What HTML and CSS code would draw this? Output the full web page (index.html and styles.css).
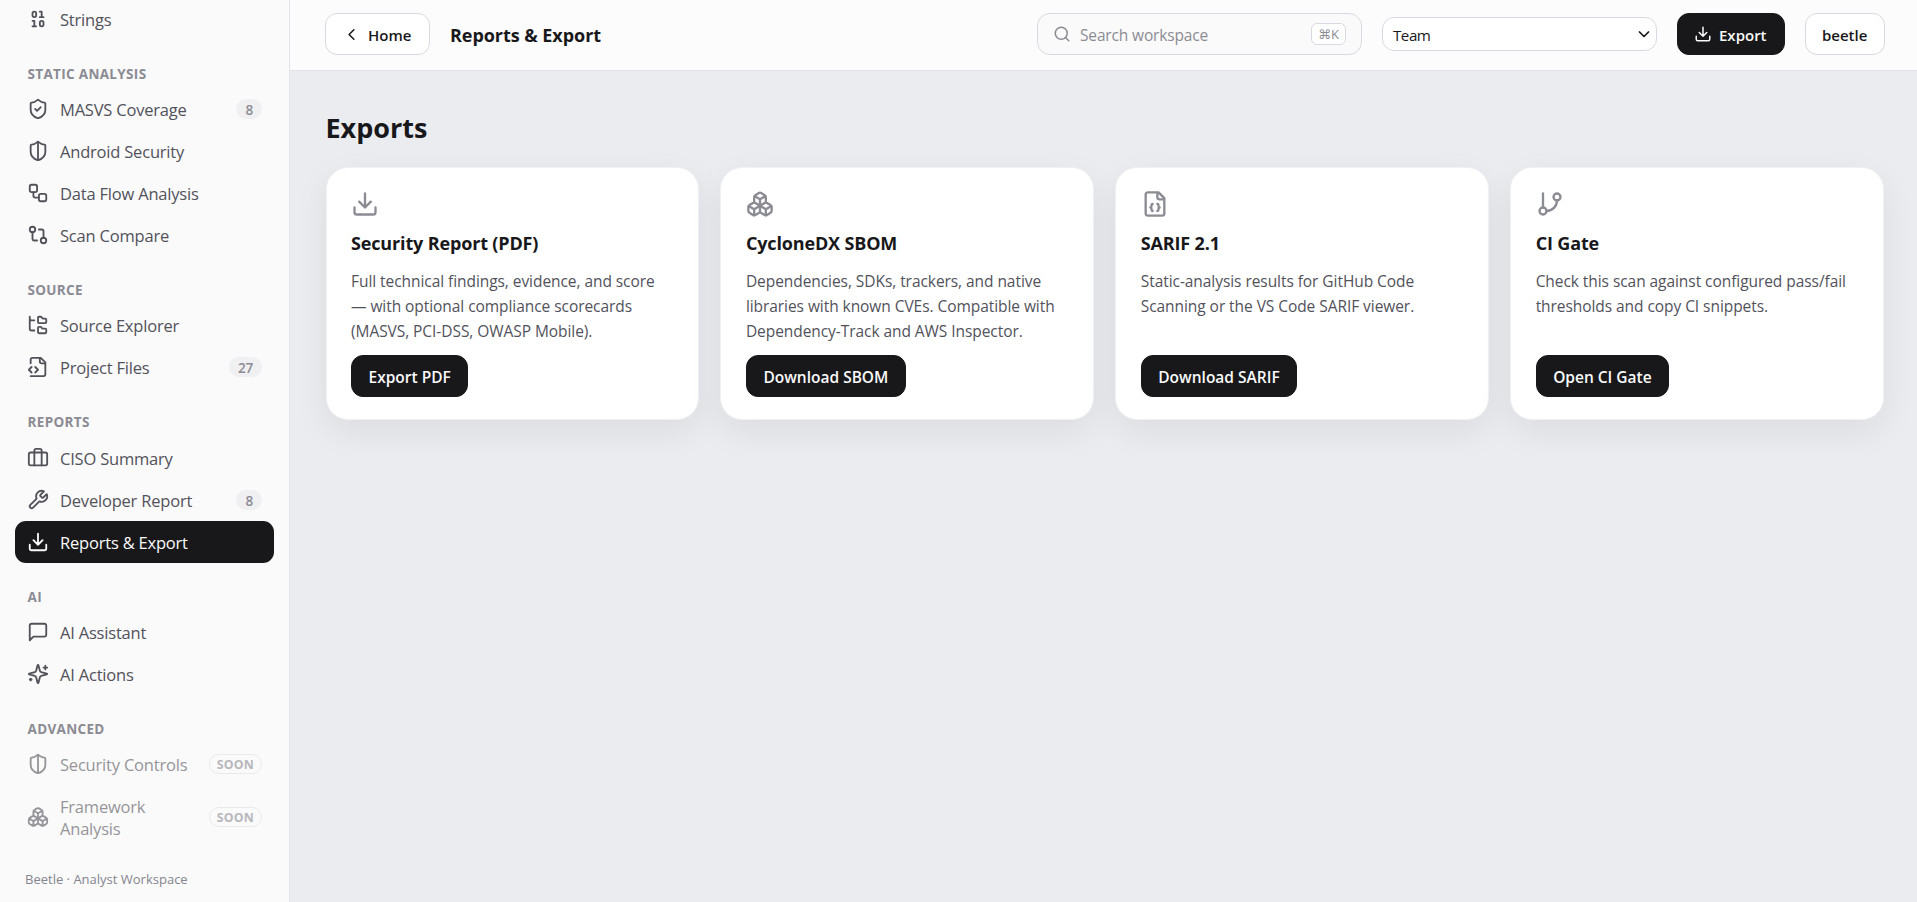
FILE: index.html
```html
<!DOCTYPE html>
<html lang="en">
  <head>
    <meta charset="UTF-8" />
    <title>Reports &amp; Export</title>
    <link rel="stylesheet" href="styles.css">
  </head>

  <body>
    <!-- icon set -->
    <svg class="icon-defs" width="0" height="0">
      <symbol id="i-binary" viewBox="0 0 24 24"><rect x="14" y="14" width="4" height="6" rx="2"/><rect x="6" y="4" width="4" height="6" rx="2"/><path d="M6 20h4M14 10h4M6 14h2v6M14 4h2v6"/></symbol>
      <symbol id="i-shield-check" viewBox="0 0 24 24"><path d="M20 13c0 5-3.5 7.5-7.66 8.95a1 1 0 0 1-.67-.01C7.5 20.5 4 18 4 13V6a1 1 0 0 1 1-1c2 0 4.5-1.2 6.24-2.72a1.17 1.17 0 0 1 1.52 0C14.51 3.81 17 5 19 5a1 1 0 0 1 1 1z"/><path d="m9 12 2 2 4-4"/></symbol>
      <symbol id="i-shield" viewBox="0 0 24 24"><path d="M20 13c0 5-3.5 7.5-7.66 8.95a1 1 0 0 1-.67-.01C7.5 20.5 4 18 4 13V6a1 1 0 0 1 1-1c2 0 4.5-1.2 6.24-2.72a1.17 1.17 0 0 1 1.52 0C14.51 3.81 17 5 19 5a1 1 0 0 1 1 1z"/><path d="M12 22V2"/></symbol>
      <symbol id="i-workflow" viewBox="0 0 24 24"><rect width="8" height="8" x="3" y="3" rx="2"/><path d="M7 11v4a2 2 0 0 0 2 2h4"/><rect width="8" height="8" x="13" y="13" rx="2"/></symbol>
      <symbol id="i-compare" viewBox="0 0 24 24"><circle cx="18" cy="18" r="3"/><circle cx="6" cy="6" r="3"/><path d="M13 6h3a2 2 0 0 1 2 2v7M11 18H8a2 2 0 0 1-2-2V9"/></symbol>
      <symbol id="i-tree" viewBox="0 0 24 24"><path d="M20 10a1 1 0 0 0 1-1V6a1 1 0 0 0-1-1h-2.500a1 1 0 0 1-.8-.4l-.9-1.200A1 1 0 0 0 15 3h-2a1 1 0 0 0-1 1v5a1 1 0 0 0 1 1ZM20 21a1 1 0 0 0 1-1v-3a1 1 0 0 0-1-1h-2.900a1 1 0 0 1-.88-.55l-.42-.85a1 1 0 0 0-.92-.6H13a1 1 0 0 0-1 1v5a1 1 0 0 0 1 1ZM3 5a2 2 0 0 0 2 2h3M3 3v13a2 2 0 0 0 2 2h3"/></symbol>
      <symbol id="i-file-code" viewBox="0 0 24 24"><path d="M4 22h14a2 2 0 0 0 2-2V7l-5-5H6a2 2 0 0 0-2 2v4"/><path d="M14 2v4a2 2 0 0 0 2 2h4M5 12l-3 3 3 3M9 18l3-3-3-3"/></symbol>
      <symbol id="i-case" viewBox="0 0 24 24"><path d="M16 20V4a2 2 0 0 0-2-2h-4a2 2 0 0 0-2 2v16"/><rect width="20" height="14" x="2" y="6" rx="2"/></symbol>
      <symbol id="i-wrench" viewBox="0 0 24 24"><path d="M14.7 6.300a1 1 0 0 0 0 1.400l1.600 1.600a1 1 0 0 0 1.400 0l3.770-3.770a6 6 0 0 1-7.940 7.940l-6.910 6.910a2.120 2.120 0 0 1-3-3l6.910-6.910a6 6 0 0 1 7.940-7.940l-3.760 3.760z"/></symbol>
      <symbol id="i-download" viewBox="0 0 24 24"><path d="M21 15v4a2 2 0 0 1-2 2H5a2 2 0 0 1-2-2v-4M7 10l5 5 5-5M12 15V3"/></symbol>
      <symbol id="i-message" viewBox="0 0 24 24"><path d="M21 15a2 2 0 0 1-2 2H7l-4 4V5a2 2 0 0 1 2-2h14a2 2 0 0 1 2 2z"/></symbol>
      <symbol id="i-sparkles" viewBox="0 0 24 24"><path d="M9.937 15.500A2 2 0 0 0 8.500 14.063l-6.135-1.582a.5.5 0 0 1 0-.962L8.500 9.936A2 2 0 0 0 9.937 8.500l1.582-6.135a.5.5 0 0 1 .963 0L14.063 8.500A2 2 0 0 0 15.500 9.937l6.135 1.581a.5.5 0 0 1 0 .964L15.500 14.063a2 2 0 0 0-1.437 1.437l-1.582 6.135a.5.5 0 0 1-.963 0zM20 3v4M22 5h-4M4 17v2M5 18H3"/></symbol>
      <symbol id="i-boxes" viewBox="0 0 24 24"><path d="M2.970 12.920A2 2 0 0 0 2 14.630v3.240a2 2 0 0 0 .97 1.710l3 1.800a2 2 0 0 0 2.060 0L12 19v-5.500l-5-3-4.030 2.420ZM7 16.500l-4.740-2.850M7 16.500l5-3M7 16.500v5.170M12 13.500V19l3.970 2.380a2 2 0 0 0 2.060 0l3-1.800a2 2 0 0 0 .97-1.710v-3.240a2 2 0 0 0-.97-1.710L17 10.500l-5 3ZM17 16.500l-5-3M17 16.500l4.740-2.850M17 16.500v5.170M7.970 4.420A2 2 0 0 0 7 6.130v4.370l5 3 5-3V6.130a2 2 0 0 0-.97-1.710l-3-1.800a2 2 0 0 0-2.060 0l-3 1.800ZM12 8 7.260 5.150M12 8l4.740-2.850M12 13.500V8"/></symbol>
      <symbol id="i-file-json" viewBox="0 0 24 24"><path d="M15 2H6a2 2 0 0 0-2 2v16a2 2 0 0 0 2 2h12a2 2 0 0 0 2-2V7ZM14 2v4a2 2 0 0 0 2 2h4M10 12a1 1 0 0 0-1 1v1a1 1 0 0 1-1 1 1 1 0 0 1 1 1v1a1 1 0 0 0 1 1M14 18a1 1 0 0 0 1-1v-1a1 1 0 0 1 1-1 1 1 0 0 1-1-1v-1a1 1 0 0 0-1-1"/></symbol>
      <symbol id="i-branch" viewBox="0 0 24 24"><path d="M6 3v12"/><circle cx="18" cy="6" r="3"/><circle cx="6" cy="18" r="3"/><path d="M18 9a9 9 0 0 1-9 9"/></symbol>
      <symbol id="i-search" viewBox="0 0 24 24"><circle cx="11" cy="11" r="8"/><path d="m21 21-4.300-4.300"/></symbol>
      <symbol id="i-left" viewBox="0 0 24 24"><path d="m15 18-6-6 6-6"/></symbol>
      <symbol id="i-down" viewBox="0 0 24 24"><path d="m3 8 9 9 9-9"/></symbol>
    </svg>

    <div class="app">
      <aside class="sidebar">
        <nav class="nav">
          <a class="nav-item"><svg class="icon"><use href="#i-binary"/></svg><span class="nav-text">Strings</span></a>

          <div class="nav-label">STATIC ANALYSIS</div>
          <a class="nav-item"><svg class="icon"><use href="#i-shield-check"/></svg><span class="nav-text">MASVS Coverage</span><span class="count">8</span></a>
          <a class="nav-item"><svg class="icon"><use href="#i-shield"/></svg><span class="nav-text">Android Security</span></a>
          <a class="nav-item"><svg class="icon"><use href="#i-workflow"/></svg><span class="nav-text">Data Flow Analysis</span></a>
          <a class="nav-item"><svg class="icon"><use href="#i-compare"/></svg><span class="nav-text">Scan Compare</span></a>

          <div class="nav-label">SOURCE</div>
          <a class="nav-item"><svg class="icon"><use href="#i-tree"/></svg><span class="nav-text">Source Explorer</span></a>
          <a class="nav-item"><svg class="icon"><use href="#i-file-code"/></svg><span class="nav-text">Project Files</span><span class="count">27</span></a>

          <div class="nav-label">REPORTS</div>
          <a class="nav-item"><svg class="icon"><use href="#i-case"/></svg><span class="nav-text">CISO Summary</span></a>
          <a class="nav-item"><svg class="icon"><use href="#i-wrench"/></svg><span class="nav-text">Developer Report</span><span class="count">8</span></a>
          <a class="nav-item active"><svg class="icon"><use href="#i-download"/></svg><span class="nav-text">Reports &amp; Export</span></a>

          <div class="nav-label">AI</div>
          <a class="nav-item"><svg class="icon"><use href="#i-message"/></svg><span class="nav-text">AI Assistant</span></a>
          <a class="nav-item"><svg class="icon"><use href="#i-sparkles"/></svg><span class="nav-text">AI Actions</span></a>

          <div class="nav-label">ADVANCED</div>
          <a class="nav-item disabled"><svg class="icon"><use href="#i-shield"/></svg><span class="nav-text">Security Controls</span><span class="soon">SOON</span></a>
          <a class="nav-item disabled"><svg class="icon"><use href="#i-boxes"/></svg><span class="nav-text">Framework Analysis</span><span class="soon">SOON</span></a>
        </nav>
        <div class="sidebar-footer">Beetle · Analyst Workspace</div>
      </aside>

      <div class="main">
        <header class="topbar">
          <button class="btn btn-home"><svg class="icon"><use href="#i-left"/></svg><span>Home</span></button>
          <div class="page-title">Reports &amp; Export</div>
          <div class="search">
            <svg class="icon"><use href="#i-search"/></svg>
            <span class="search-text">Search workspace</span>
            <kbd>⌘K</kbd>
          </div>
          <div class="select"><span>Team</span><svg class="icon"><use href="#i-down"/></svg></div>
          <button class="btn btn-dark btn-export"><svg class="icon"><use href="#i-download"/></svg><span>Export</span></button>
          <button class="btn btn-user"><span>beetle</span></button>
        </header>

        <main class="content">
          <h1>Exports</h1>
          <div class="cards">
            <section class="card">
              <svg class="icon"><use href="#i-download"/></svg>
              <h2>Security Report (PDF)</h2>
              <p>Full technical findings, evidence, and score — with optional compliance scorecards (MASVS, PCI-DSS, OWASP Mobile).</p>
              <button class="btn btn-dark">Export PDF</button>
            </section>
            <section class="card">
              <svg class="icon"><use href="#i-boxes"/></svg>
              <h2>CycloneDX SBOM</h2>
              <p>Dependencies, SDKs, trackers, and native libraries with known CVEs. Compatible with Dependency-Track and AWS Inspector.</p>
              <button class="btn btn-dark">Download SBOM</button>
            </section>
            <section class="card">
              <svg class="icon"><use href="#i-file-json"/></svg>
              <h2>SARIF 2.1</h2>
              <p>Static-analysis results for GitHub Code Scanning or the VS Code SARIF viewer.</p>
              <button class="btn btn-dark">Download SARIF</button>
            </section>
            <section class="card">
              <svg class="icon"><use href="#i-branch"/></svg>
              <h2>CI Gate</h2>
              <p>Check this scan against configured pass/fail thresholds and copy CI snippets.</p>
              <button class="btn btn-dark">Open CI Gate</button>
            </section>
          </div>
        </main>
      </div>
    </div>
  </body>
</html>
```
FILE: styles.css
```css
* {
  box-sizing: border-box;
}
body {
  margin: 0;
  background: #ebecf0;
  color: #18181b;
  font-family: "Segoe UI", "Open Sans", sans-serif;
  font-size: 16px;
}
.icon-defs {
  display: none;
}
.icon {
  fill: none;
  stroke: currentColor;
  stroke-width: 2;
  stroke-linecap: round;
  stroke-linejoin: round;
  flex-shrink: 0;
}
.app {
  display: flex;
  height: 902px;
  overflow: hidden;
}

/* sidebar, scrolled to the end of the list */
.sidebar {
  width: 290px;
  flex-shrink: 0;
  display: flex;
  flex-direction: column;
  justify-content: flex-end;
  background: #fafafa;
  border-right: 1px solid #e2e3e8;
}
.nav {
  flex-shrink: 0;
  padding: 0 15px;
}
.nav-item {
  display: flex;
  align-items: center;
  gap: 11px;
  min-height: 42px;
  padding: 9px 12px;
  border-radius: 11px;
  color: #52525b;
  font-size: 16.5px;
  line-height: 22px;
  letter-spacing: -0.2px;
}
.nav-item .icon {
  width: 22px;
  height: 22px;
}
.nav-text {
  flex: 1;
  padding-top: 2px;
}
.nav-item.active {
  background: #18181b;
  color: #fafafa;
}
.nav-item.disabled {
  opacity: 0.6;
}
.nav-label {
  height: 48.3px;
  padding: 24px 12.5px 0;
  color: #8b8b94;
  font-size: 13.5px;
  font-weight: 700;
  line-height: 20px;
  letter-spacing: 0.33px;
}
.count {
  height: 20px;
  padding: 0 9px;
  border-radius: 10px;
  background: #f0f0f2;
  color: #8b8b94;
  font-size: 13.5px;
  font-weight: 600;
  line-height: 22px;
}
.soon {
  height: 20px;
  padding: 0 7px;
  border: 1px solid #e0e0e6;
  border-radius: 10px;
  color: #8b8b94;
  font-size: 12.3px;
  font-weight: 700;
  line-height: 19px;
  letter-spacing: 0.25px;
}
.sidebar-footer {
  flex-shrink: 0;
  height: 52.8px;
  padding: 20px 25px 0;
  color: #85858f;
  font-size: 13px;
  line-height: 20px;
}

/* top bar */
.main {
  flex: 1;
  min-width: 0;
}
.topbar {
  height: 71px;
  display: flex;
  align-items: center;
  gap: 20px;
  padding: 0 32px 2px 35px;
  background: #fcfcfc;
  border-bottom: 1px solid #e2e3e8;
}
.topbar span {
  padding-top: 2px;
}
.btn {
  display: inline-flex;
  align-items: center;
  height: 42px;
  padding: 0 16px;
  border: 1px solid #d9d9e3;
  border-radius: 12px;
  background: #fff;
  color: #18181b;
  font-family: inherit;
  font-size: 15px;
  font-weight: 600;
}
.btn-dark {
  border-color: #18181b;
  background: #18181b;
  color: #fafafa;
}
.btn-home {
  width: 105px;
}
.btn-home .icon {
  width: 19px;
  height: 19px;
  margin-right: 7px;
}
.page-title {
  margin-right: auto;
  padding-top: 2px;
  font-size: 18px;
  font-weight: 700;
  letter-spacing: -0.05px;
}
.search {
  display: flex;
  align-items: center;
  width: 325px;
  height: 42px;
  padding: 0 15px;
  border: 1px solid #d9d9e3;
  border-radius: 13px;
  background: #fafafa;
  color: #8b8b94;
}
.search .icon {
  width: 18px;
  height: 18px;
  margin-right: 9px;
}
.search-text {
  flex: 1;
  font-size: 15.5px;
  letter-spacing: -0.15px;
}
kbd {
  height: 22px;
  padding: 0 6px;
  border: 1px solid #d9d9e3;
  border-radius: 6px;
  background: #fff;
  font-family: "Segoe UI", "Open Sans", "DejaVu Sans", sans-serif;
  font-size: 13px;
  line-height: 21px;
}
.select {
  display: flex;
  align-items: center;
  justify-content: space-between;
  width: 275px;
  height: 34px;
  padding: 0 6px 0 10px;
  border: 1px solid #d9d9e3;
  border-radius: 12px;
  background: #fff;
  font-size: 15.2px;
  letter-spacing: -0.5px;
}
.select .icon {
  width: 12px;
  height: 12px;
  stroke-width: 3.5;
}
.btn-export {
  width: 108px;
}
.btn-export .icon {
  width: 18px;
  height: 18px;
  margin-right: 7px;
}
.btn-user {
  width: 80px;
}

/* export cards */
.content {
  padding: 38px 33px 0 35.5px;
}
h1 {
  margin: 0 0 20px;
  font-size: 27px;
  line-height: 38px;
}
.cards {
  display: grid;
  grid-template-columns: repeat(4, 1fr);
  gap: 21px;
}
.card {
  display: flex;
  flex-direction: column;
  align-items: flex-start;
  height: 253px;
  padding: 22px 24.5px;
  border: 1px solid #f1f1f4;
  border-radius: 22px;
  background: #fff;
  box-shadow: 0 12px 34px rgba(24, 24, 27, 0.07);
}
.card .icon {
  width: 28px;
  height: 28px;
  color: #8b8b94;
}
h2 {
  margin: 12px 0 13px;
  font-size: 18px;
  line-height: 26px;
  letter-spacing: -0.15px;
}
p {
  margin: 0;
  color: #52525b;
  font-size: 15.5px;
  line-height: 25px;
  letter-spacing: -0.06px;
}
.card .btn {
  margin-top: auto;
  padding: 2px 16.5px 0;
  font-size: 15.5px;
}
```
